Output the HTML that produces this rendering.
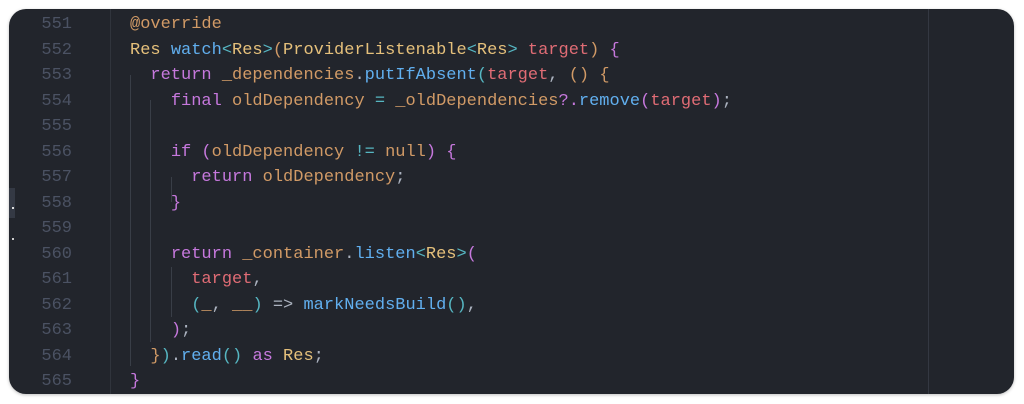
<!DOCTYPE html>
<html><head><meta charset="utf-8"><style>
html,body{margin:0;padding:0;background:#fff;width:1024px;height:404px;overflow:hidden}
.card{position:absolute;left:9px;top:9px;width:1005px;height:385px;background:#22252c;border-radius:17px;box-shadow:0 1px 3px rgba(0,0,0,.25);overflow:hidden}
.gut{position:absolute;left:101px;top:0;width:1px;height:100%;background:#30343c}
.rl{position:absolute;left:919px;top:0;width:1px;height:100%;background:#343842}
.ln{position:absolute;left:0;width:63px;text-align:right;color:#4b5263}
.code{position:absolute;left:121px;color:#abb2bf;white-space:pre}
.row{position:absolute;height:25.5px;line-height:25.5px;font-family:"Liberation Mono",monospace;font-size:17px;margin-top:2px}
.g{position:absolute;width:1px;background:#393e47}
.k{color:#c678dd}.t{color:#e5c07b}.f{color:#61afef}.v{color:#e06c75}.o{color:#d19a66}.c{color:#56b6c2}.p{color:#abb2bf}
</style></head><body><div class="card">
<div class="gut"></div><div class="rl"></div>
<div style="position:absolute;left:0;top:179px;width:6px;height:30px;background:#343944"></div>
<div style="position:absolute;left:3px;top:198px;width:2px;height:2px;background:#ddd"></div>
<div style="position:absolute;left:3px;top:229px;width:2px;height:2px;background:#ccc"></div>
<div class="g" style="left:121px;top:66px;height:291px"></div>
<div class="g" style="left:141px;top:91px;height:242px"></div>
<div class="g" style="left:162px;top:168px;height:25px"></div>
<div class="g" style="left:162px;top:258px;height:50px"></div>
<div class="row ln" style="top:1px">551</div>
<div class="row ln" style="top:26.5px">552</div>
<div class="row ln" style="top:52px">553</div>
<div class="row ln" style="top:77.5px">554</div>
<div class="row ln" style="top:103px">555</div>
<div class="row ln" style="top:128.5px">556</div>
<div class="row ln" style="top:154px">557</div>
<div class="row ln" style="top:179.5px">558</div>
<div class="row ln" style="top:205px">559</div>
<div class="row ln" style="top:230.5px">560</div>
<div class="row ln" style="top:256px">561</div>
<div class="row ln" style="top:281.5px">562</div>
<div class="row ln" style="top:307px">563</div>
<div class="row ln" style="top:332.5px">564</div>
<div class="row ln" style="top:358px">565</div>
<div class="row code" style="top:1px"><span class="o">@override</span></div>
<div class="row code" style="top:26.5px"><span class="t">Res</span> <span class="f">watch</span><span class="c">&lt;</span><span class="t">Res</span><span class="c">&gt;</span><span class="o">(</span><span class="t">ProviderListenable</span><span class="c">&lt;</span><span class="t">Res</span><span class="c">&gt;</span> <span class="v">target</span><span class="o">)</span> <span class="k">{</span></div>
<div class="row code" style="top:52px">  <span class="k">return</span> <span class="o">_dependencies</span>.<span class="f">putIfAbsent</span><span class="c">(</span><span class="v">target</span>, <span class="o">()</span> <span class="o">{</span></div>
<div class="row code" style="top:77.5px">    <span class="k">final</span> <span class="o">oldDependency</span> <span class="c">=</span> <span class="o">_oldDependencies</span><span class="k">?.</span><span class="f">remove</span><span class="k">(</span><span class="v">target</span><span class="k">)</span>;</div>
<div class="row code" style="top:128.5px">    <span class="k">if</span> <span class="k">(</span><span class="o">oldDependency</span> <span class="c">!=</span> <span class="o">null</span><span class="k">)</span> <span class="k">{</span></div>
<div class="row code" style="top:154px">      <span class="k">return</span> <span class="o">oldDependency</span>;</div>
<div class="row code" style="top:179.5px">    <span class="k">}</span></div>
<div class="row code" style="top:230.5px">    <span class="k">return</span> <span class="o">_container</span>.<span class="f">listen</span><span class="c">&lt;</span><span class="t">Res</span><span class="c">&gt;</span><span class="k">(</span></div>
<div class="row code" style="top:256px">      <span class="v">target</span>,</div>
<div class="row code" style="top:281.5px">      <span class="c">(</span><span class="o">_</span>, <span class="o">__</span><span class="c">)</span> <span class="p">=&gt;</span> <span class="f">markNeedsBuild</span><span class="c">()</span>,</div>
<div class="row code" style="top:307px">    <span class="k">)</span>;</div>
<div class="row code" style="top:332.5px">  <span class="o">}</span><span class="c">)</span>.<span class="f">read</span><span class="c">()</span> <span class="k">as</span> <span class="t">Res</span>;</div>
<div class="row code" style="top:358px"><span class="k">}</span></div>
</div></body></html>
